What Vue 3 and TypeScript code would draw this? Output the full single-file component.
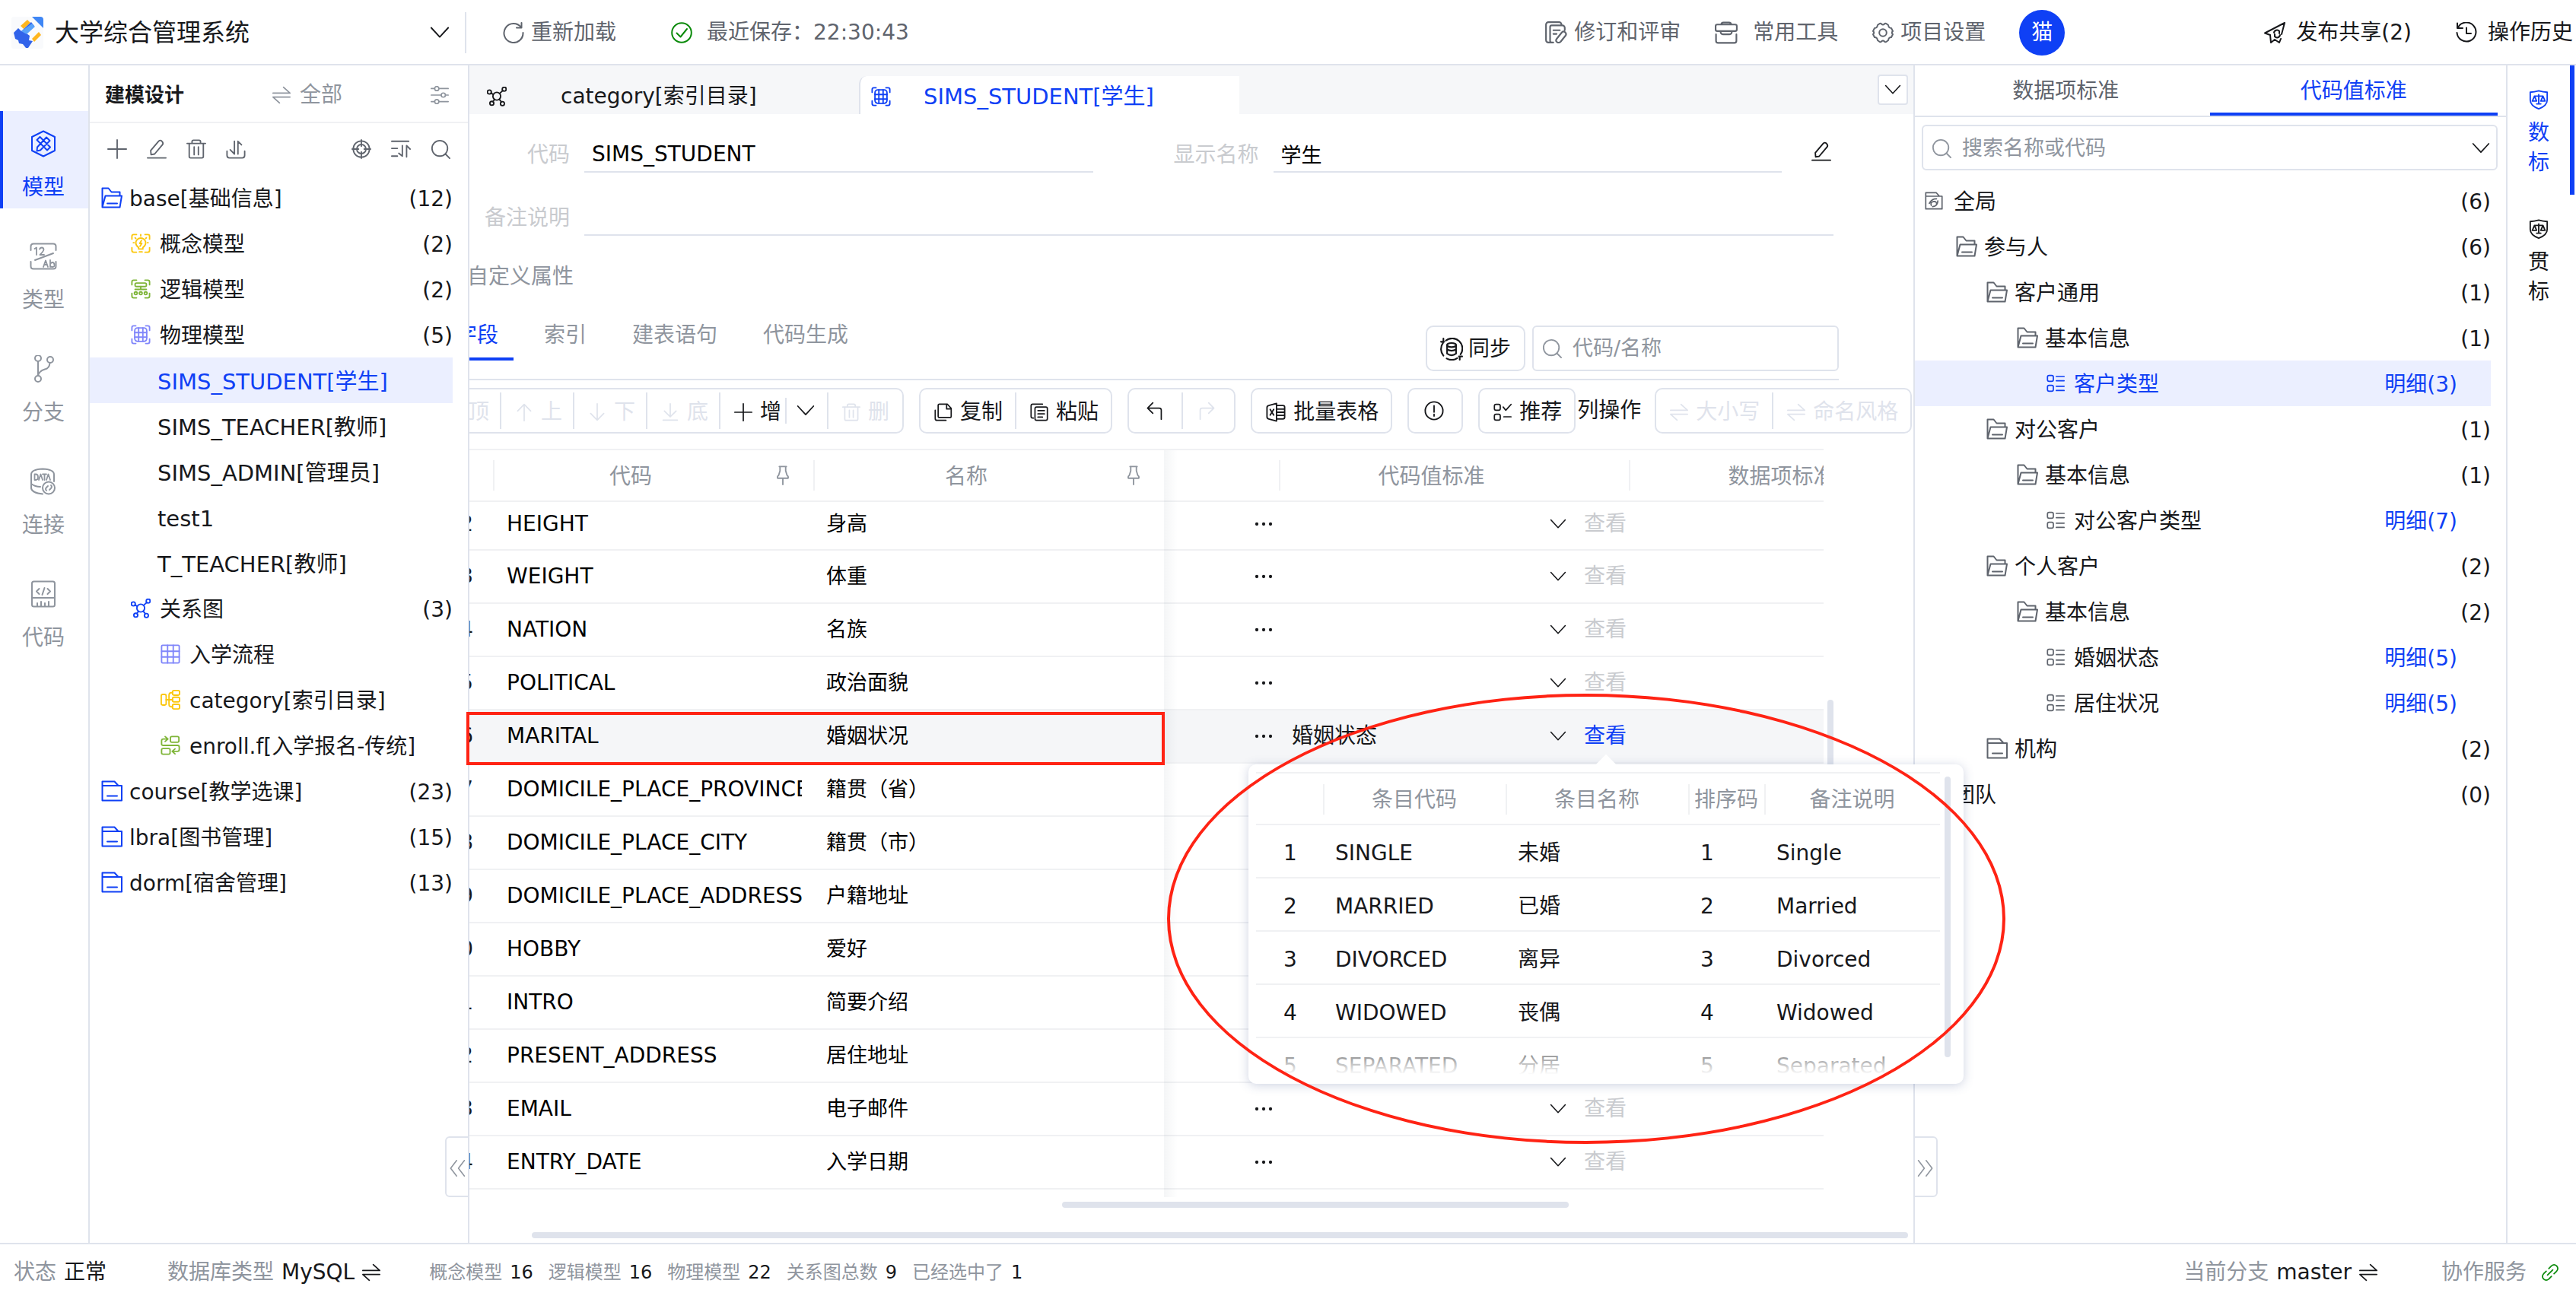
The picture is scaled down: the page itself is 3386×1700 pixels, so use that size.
<script setup lang="ts">
import { ref } from 'vue'

interface RailItem { icon: string; label: string }
interface TreeNode {
  label: string
  level: number
  icon?: string
  tone?: string
  count?: number
  table?: boolean
}
interface StdNode { label: string; level: number; icon?: string; count?: number; detail?: number }
interface Field { no: number; code: string; name: string; std?: string }
interface Entry { no: number; code: string; name: string; note: string }
interface Stat { label: string; value: number }

const rail: RailItem[] = [
  { icon: 'model', label: '模型' },
  { icon: 'type', label: '类型' },
  { icon: 'branch', label: '分支' },
  { icon: 'data', label: '连接' },
  { icon: 'codebox', label: '代码' }
]
const activeRail = ref('模型')

const tree: TreeNode[] = [
  { label: 'base[基础信息]', level: 0, icon: 'folder-open', tone: 'blue', count: 12 },
  { label: '概念模型', level: 1, icon: 'concept', tone: 'yellow', count: 2 },
  { label: '逻辑模型', level: 1, icon: 'logic', tone: 'green', count: 2 },
  { label: '物理模型', level: 1, icon: 'physical', tone: 'violet', count: 5 },
  { label: 'SIMS_STUDENT[学生]', level: 2, table: true },
  { label: 'SIMS_TEACHER[教师]', level: 2, table: true },
  { label: 'SIMS_ADMIN[管理员]', level: 2, table: true },
  { label: 'test1', level: 2, table: true },
  { label: 'T_TEACHER[教师]', level: 2, table: true },
  { label: '关系图', level: 1, icon: 'relation', tone: 'blue', count: 3 },
  { label: '入学流程', level: 2, icon: 'grid', tone: 'violet' },
  { label: 'category[索引目录]', level: 2, icon: 'mind', tone: 'yellow' },
  { label: 'enroll.f[入学报名-传统]', level: 2, icon: 'flow', tone: 'green' },
  { label: 'course[教学选课]', level: 0, icon: 'folder', tone: 'blue', count: 23 },
  { label: 'lbra[图书管理]', level: 0, icon: 'folder', tone: 'blue', count: 15 },
  { label: 'dorm[宿舍管理]', level: 0, icon: 'folder', tone: 'blue', count: 13 }
]
const selected = ref('SIMS_STUDENT[学生]')

const stdTree: StdNode[] = [
  { label: '全局', level: 0, icon: 'global', count: 6 },
  { label: '参与人', level: 1, icon: 'folder-open', count: 6 },
  { label: '客户通用', level: 2, icon: 'folder-open', count: 1 },
  { label: '基本信息', level: 3, icon: 'folder-open', count: 1 },
  { label: '客户类型', level: 4, icon: 'list', detail: 3 },
  { label: '对公客户', level: 2, icon: 'folder-open', count: 1 },
  { label: '基本信息', level: 3, icon: 'folder-open', count: 1 },
  { label: '对公客户类型', level: 4, icon: 'list', detail: 7 },
  { label: '个人客户', level: 2, icon: 'folder-open', count: 2 },
  { label: '基本信息', level: 3, icon: 'folder-open', count: 2 },
  { label: '婚姻状态', level: 4, icon: 'list', detail: 5 },
  { label: '居住状况', level: 4, icon: 'list', detail: 5 },
  { label: '机构', level: 2, icon: 'folder', count: 2 },
  { label: '团队', level: 0, icon: 'global', count: 0 }
]
const selectedStd = ref('客户类型')

const fields = ref<Field[]>([
  { no: 12, code: 'HEIGHT', name: '身高' },
  { no: 13, code: 'WEIGHT', name: '体重' },
  { no: 14, code: 'NATION', name: '名族' },
  { no: 15, code: 'POLITICAL', name: '政治面貌' },
  { no: 16, code: 'MARITAL', name: '婚姻状况', std: '婚姻状态' },
  { no: 17, code: 'DOMICILE_PLACE_PROVINCE', name: '籍贯（省）' },
  { no: 18, code: 'DOMICILE_PLACE_CITY', name: '籍贯（市）' },
  { no: 19, code: 'DOMICILE_PLACE_ADDRESS', name: '户籍地址' },
  { no: 20, code: 'HOBBY', name: '爱好' },
  { no: 21, code: 'INTRO', name: '简要介绍' },
  { no: 22, code: 'PRESENT_ADDRESS', name: '居住地址' },
  { no: 23, code: 'EMAIL', name: '电子邮件' },
  { no: 24, code: 'ENTRY_DATE', name: '入学日期' }
])

const entries: Entry[] = [
  { no: 1, code: 'SINGLE', name: '未婚', note: 'Single' },
  { no: 2, code: 'MARRIED', name: '已婚', note: 'Married' },
  { no: 3, code: 'DIVORCED', name: '离异', note: 'Divorced' },
  { no: 4, code: 'WIDOWED', name: '丧偶', note: 'Widowed' },
  { no: 5, code: 'SEPARATED', name: '分居', note: 'Separated' }
]

const stats: Stat[] = [
  { label: '概念模型', value: 16 },
  { label: '逻辑模型', value: 16 },
  { label: '物理模型', value: 22 },
  { label: '关系图总数', value: 9 },
  { label: '已经选中了', value: 1 }
]

const tableCode = ref('SIMS_STUDENT')
const tableName = ref('学生')
const tableNote = ref('')
</script>

<template>
  <div class="app">
    <svg class="defs" aria-hidden="true">
      <symbol id="i-down" viewBox="0 0 28 28"><path d="M2 7l12 13L26 7" /></symbol>
      <symbol id="i-reload" viewBox="0 0 28 28"><path d="M24 7A12.500 12.500 0 1 0 26.500 14M24.500 1v6.500H18" /></symbol>
      <symbol id="i-check" viewBox="0 0 28 28"><circle cx="14" cy="14" r="12.800" /><path d="M7.500 14.500l5 5L21 9" /></symbol>
      <symbol id="i-review" viewBox="0 0 28 28"><path d="M8 26H5a3 3 0 0 1-3-3V4a3 3 0 0 1 3-3h13a3 3 0 0 1 3 3M11 26H9a2 2 0 0 1-2-2V7a2 2 0 0 1 2-2h13a3 3 0 0 1 3 3v3M11 11h8M11 15.500h4M15.500 21l6-7.500q2-2 4 0t.5 4L20 25q-2 2-4.500.5t0-4.500z" /></symbol>
      <symbol id="i-toolbox" viewBox="0 0 28 28"><path d="M8 4q0-2.500 2.500-2.500h7Q20 1.500 20 4M3 4h22q2 0 2 2v4q0 2-2 2H3q-2 0-2-2V6q0-2 2-2zM7 12q0 4 3 4h8q3 0 3-4M1.500 16v8q0 2.500 2.500 2.500h20q2.500 0 2.500-2.500v-8" /></symbol>
      <symbol id="i-gear" viewBox="0 0 28 28"><path d="M9 2.500q2-1.500 3 0 2 2 4 0 1-1.500 3 0l2 1.500q.5 4 4 4l2 4q-2.500 2 0 4l-2 4q-3.500 0-4 4l-2 1.500q-2 1.500-3 0-2-2-4 0-1 1.500-3 0L7 24q-.5-4-4-4l-2-4q2.500-2 0-4l2-4q3.500 0 4-4z" /><circle cx="14" cy="14" r="4.800" /></symbol>
      <symbol id="i-share" viewBox="0 0 28 28"><path d="M8 17L1 14.500 27 1l-4 15M8 17l1 10 5-4 6 4 2-5M13 14a4 4 0 0 1 7-2M21 17a4 4 0 0 1-7 2M14 19v-3M20 12v3" /></symbol>
      <symbol id="i-history" viewBox="0 0 28 28"><path d="M3 7A12.500 12.500 0 1 1 1.500 14M2 1.500V8h7M14 7.500V15h6" /></symbol>
      <symbol id="i-model" viewBox="0 0 36 36"><path d="M18 1.500l15 7.500v18l-15 7.500L3 27V9zM9.500 13l4-4L27 22.500l-4 4zM22 9.500l4.500 4.500L14 26.500l-4.500 1 .5-5z" /></symbol>
      <symbol id="i-type" viewBox="0 0 36 36"><path d="M1.500 10V5q0-3.500 3.500-3.500h26q3.500 0 3.500 3.500v5M1.500 25v6q0 3.500 3.500 3.500h26q3.500 0 3.500-3.500v-6M7 23l24-9" /><path d="M6.500 8L9 6.500V16M13 8.500q1-2 3-2t2.500 2.500q0 2-5 7H19M18 32l3-8.500 3 8.500m-5-3h4M27 23v9m0-4q1-2 3-2t2.500 3-2.500 3-3-2" stroke-width="1.800" /></symbol>
      <symbol id="i-branch" viewBox="0 0 36 36"><circle cx="11" cy="4" r="4" /><circle cx="27" cy="6" r="4" /><circle cx="11" cy="31" r="4" /><path d="M11 8v19Q12 21 20 18.500q6-1 6.500-8.500" /></symbol>
      <symbol id="i-data" viewBox="0 0 36 36"><path d="M2 9q0-7 15-7.500Q32 2 32 9v9M2 9v18q1 6 15 7.500M2 21q5 4 12 4" /><circle cx="25" cy="26.500" r="8" /><path d="M22 30q-2-2 0-4l2-2m2 5l2-2q2-2 0-4M6.500 16V8.500H8q3 0 3 3.700T8 16zM12 16l2.500-7.500L17 16M17 8.500h5M19.500 8.500V16M22 16l2.500-7.500L27 16" stroke-width="1.800" /></symbol>
      <symbol id="i-codebox" viewBox="0 0 36 36"><rect x="3" y="1.500" width="30" height="33" rx="2.500" /><path d="M3 23h30M12.500 11L9 14.500l3.500 3.500M23.500 11l3.500 3.500-3.500 3.500M19.500 10l-3 9M10 34v-4M15 34v-6M20 34v-4M25 34v-6" /></symbol>
      <symbol id="i-swap" viewBox="0 0 28 28"><path d="M1 11h26L17 2M27 17H1l10 9" /></symbol>
      <symbol id="i-sliders" viewBox="0 0 28 28"><path d="M1 4h5m7 0h14M1 14h15m7 0h4M1 24h5m7 0h14" /><circle cx="9.500" cy="4" r="3.200" /><circle cx="19.500" cy="14" r="3.200" /><circle cx="9.500" cy="24" r="3.200" /></symbol>
      <symbol id="i-plus" viewBox="0 0 28 28"><path d="M14 1v26M1 14h26" /></symbol>
      <symbol id="i-edit" viewBox="0 0 28 28"><path d="M1 26.500h26M6 22l-.5-6L16.500 3q2.500-2.500 5 0t.5 5L11 21z" /></symbol>
      <symbol id="i-trash" viewBox="0 0 28 28"><path d="M1 6h26M8 6V3.500Q8 1.500 10 1.500h8q2 0 2 2V6M4 6v18.500q0 2 2 2h16q2 0 2-2V6M11 11v11M17 11v11" /></symbol>
      <symbol id="i-export" viewBox="0 0 28 28"><path d="M1.500 17v6q0 3.500 3.500 3.500h18q3.500 0 3.500-3.500v-6M12 3v18L6 15M17 21V3l5 5" /></symbol>
      <symbol id="i-aim" viewBox="0 0 28 28"><circle cx="14" cy="14" r="11.500" /><circle cx="14" cy="14" r="6.500" /><path d="M14 1v9M14 18v9M1 14h9M18 14h9" /></symbol>
      <symbol id="i-sort" viewBox="0 0 28 28"><path d="M1 3h24M1 13h8M1 24h8M16 9v15l-5-4M22 25V9l5 5" /></symbol>
      <symbol id="i-search" viewBox="0 0 28 28"><circle cx="13" cy="13" r="11" /><path d="M21 21l6 6" /></symbol>
      <symbol id="i-folder-open" viewBox="0 0 28 28"><path d="M1.500 26.500V1.500h8l4 5h11v5M1.500 26.500l4-15h21.500l-2.500 15zM8 21.500h13" /></symbol>
      <symbol id="i-folder" viewBox="0 0 28 28"><path d="M1.500 26.500v-25h16l5 5.500h4.500v19.500zM1.500 7H22M8 20.500h13" /></symbol>
      <symbol id="i-global" viewBox="0 0 28 28"><path d="M1.500 26.500v-25h16l5 5.500h4v19.500zM1.500 7H22M7 18q3-7 11-7M20 14q0 8-8 9M10 21q-2-5 4-6 5 0 4 5" /></symbol>
      <symbol id="i-list" viewBox="0 0 28 28"><rect x="1.500" y="2" width="9" height="9" rx="2.500" /><rect x="1.500" y="17" width="9" height="9" rx="2.500" /><path d="M15 3.500h12M15 10h12M15 18.500h12M15 25h12" /></symbol>
      <symbol id="i-concept" viewBox="0 0 28 28"><path d="M1.500 8V4q0-2.500 2.500-2.500h4M20 1.500h4q2.500 0 2.500 2.500v4M26.500 20v4q0 2.500-2.500 2.500h-4M8 26.500H4q-2.500 0-2.500-2.500v-4M11 20q-4-3-4-6.500a7 7 0 0 1 14 0q0 3.500-4 6.500v2h-6zM12 26h4M14 1.500v2M15 10l-2.500 4h3L13 18M4.500 13h-1M24.500 13h-1M6 6l1 1M22 6l-1 1" /></symbol>
      <symbol id="i-logic" viewBox="0 0 28 28"><path d="M1.500 8V4q0-2.500 2.500-2.500h4M20 1.500h4q2.500 0 2.500 2.500v4M26.500 20v4q0 2.500-2.500 2.500h-4M8 26.500H4q-2.500 0-2.500-2.500v-4" /><rect x="6" y="5.500" width="16" height="5" rx="2" /><path d="M14 10.500V14M6 14.500h16" /><circle cx="7" cy="20" r="2" /><circle cx="14" cy="20" r="2" /><circle cx="21" cy="20" r="2" /></symbol>
      <symbol id="i-physical" viewBox="0 0 28 28"><path d="M1.500 8V4q0-2.500 2.500-2.500h3M21 1.500h3q2.500 0 2.500 2.500v4M26.500 20v4q0 2.500-2.500 2.500h-3M7 26.500H4q-2.500 0-2.500-2.500v-4" /><rect x="5.500" y="4.500" width="17" height="19" rx="4" /><path d="M5.500 11h17M5.500 17.500h17M11 4.500v19M17 4.500v19" /></symbol>
      <symbol id="i-relation" viewBox="0 0 28 28"><circle cx="14" cy="13.500" r="5.500" /><circle cx="3.500" cy="7.500" r="2.800" /><circle cx="24.500" cy="3.500" r="2.800" /><circle cx="7" cy="23.500" r="2.800" /><circle cx="22" cy="24" r="2.800" /><path d="M6 9l3 2M22.500 5.500L18 9.500M8.500 21l2.500-3M20.500 21.500L17.500 18" /></symbol>
      <symbol id="i-grid" viewBox="0 0 28 28"><rect x="1.500" y="1.500" width="25" height="25" rx="1.500" /><path d="M1.500 10h25M1.500 18h25M10 1.500v25M18 1.500v25" /></symbol>
      <symbol id="i-mind" viewBox="0 0 28 28"><rect x="1" y="6.500" width="7" height="15" rx="2" /><rect x="17" y="1" width="10" height="6.500" rx="2" /><rect x="17" y="10.500" width="10" height="6.500" rx="2" /><rect x="17" y="20.500" width="10" height="6.500" rx="2" /><path d="M8 14h9M17 4h-2q-3 0-3 4v12q0 4 3 4h2" /></symbol>
      <symbol id="i-flow" viewBox="0 0 28 28"><rect x="14" y="1.500" width="12" height="8" rx="2" /><rect x="1.500" y="18.500" width="12" height="8" rx="2" /><path d="M9 5H4q-2.500 0-2.500 2.500V12q0 2 2.500 2h20q2.500 0 2.500 2.500V20q0 2.500-2.500 2.500h-5M6.500 1.500l4 3.500-4 3.500M20.500 19l-4 3.500 4 3.500" /></symbol>
      <symbol id="i-sync" viewBox="0 0 28 28"><path d="M4 5v-4M4 22A12.500 12.500 0 0 1 3.500 6.500M7 3.500a12.500 12.500 0 0 1 18 17M24 23v4M21 25a12.500 12.500 0 0 1-13 0.500M1 5h4M23 23h4" /><ellipse cx="14" cy="9" rx="5.500" ry="2.500" /><path d="M8.500 9v10.500q5.500 4 11 0V9M8.500 14.500q5.500 3 11 0" /></symbol>
      <symbol id="i-up-arrow" viewBox="0 0 28 28"><path d="M14 27V2M4 12L14 2l10 10" /></symbol>
      <symbol id="i-down-arrow" viewBox="0 0 28 28"><path d="M14 1v25M4 16l10 10 10-10" /></symbol>
      <symbol id="i-top" viewBox="0 0 28 28"><path d="M3 2h22M14 27V7M5 16l9-9 9 9" /></symbol>
      <symbol id="i-bottom" viewBox="0 0 28 28"><path d="M3 26h22M14 1v20M5 12l9 9 9-9" /></symbol>
      <symbol id="i-copy" viewBox="0 0 28 28"><path d="M8 1.500h12l6 6.500v12q0 2-2 2H8q-2 0-2-2v-16.500q0-2 2-2zM19 1.500V9h7M1.500 11v12.500q0 3 3 3H18" /></symbol>
      <symbol id="i-paste" viewBox="0 0 28 28"><path d="M5 23H4q-2.500 0-2.500-2.500V4q0-2.500 2.500-2.500h15M10 6h14q2.500 0 2.500 2.500V24q0 2.500-2.500 2.500H10q-2.500 0-2.500-2.500V8.500Q7.500 6 10 6zM12 11.500h10M12 16.500h10M12 21.500h7" /></symbol>
      <symbol id="i-undo" viewBox="0 0 28 28"><path d="M25 27V13q0-3-3-3H4M12 2l-8 8 8 8" /></symbol>
      <symbol id="i-redo" viewBox="0 0 28 28"><path d="M3 27V13q0-3 3-3h18M16 2l8 8-8 8" /></symbol>
      <symbol id="i-excel" viewBox="0 0 28 28"><path d="M15 1.500v25l-11-3q-2.500-.5-2.500-3v-13q0-2.500 2.500-3zM15 4.500h9q2.500 0 2.500 2.500v14q0 2.500-2.500 2.500h-9M15 9.500h11.500M15 14h11.500M15 18.500h11.500M6 10l5 8M11 10l-5 8" /></symbol>
      <symbol id="i-warn" viewBox="0 0 28 28"><circle cx="14" cy="14" r="12.500" /><path d="M14 7v9M14 19v2.500" /></symbol>
      <symbol id="i-suggest" viewBox="0 0 28 28"><rect x="1.500" y="2" width="9" height="9" rx="2.500" /><rect x="1.500" y="17" width="9" height="9" rx="2.500" /><path d="M15 6l4 5 8-9M16 21h11" /></symbol>
      <symbol id="i-pin" viewBox="0 0 18 28"><path d="M4 1.500h10M5 1.500v6L3 14q-2 1-1.500 4h15q.5-3-1.500-4l-2-6.500v-6M9 18v9" /></symbol>
      <symbol id="i-dots" viewBox="0 0 28 28"><g fill="currentColor" stroke="none"><circle cx="3.500" cy="14" r="2.500" /><circle cx="14" cy="14" r="2.500" /><circle cx="24.500" cy="14" r="2.500" /></g></symbol>
      <symbol id="i-shield" viewBox="0 0 28 28"><path d="M14 1.500q6 1.500 12 2v11q0 8-12 12.500Q2 22.500 2 14.500v-11q6-.5 12-2zM8 9h12M14 7v13M11 20h6M8 9l-3 7h6zM20 9l-3 7h6z" /></symbol>
      <symbol id="i-dleft" viewBox="0 0 28 28"><path d="M13 1L3 14l10 13M26 1L16 14l10 13" /></symbol>
      <symbol id="i-dright" viewBox="0 0 28 28"><path d="M2 1l10 13L2 27M15 1l10 13-10 13" /></symbol>
      <symbol id="i-link" viewBox="0 0 28 28"><path d="M12 8l4-4q4-3.500 8 0 3.500 4 0 8l-4 4M16 20l-4 4q-4 3.500-8 0-3.500-4 0-8l4-4M10 18l8-8" /></symbol>
    </svg>

    <header class="top">
      <div class="brand">
        <svg class="logo" viewBox="0 0 42 42" aria-hidden="true">
          <rect width="42" height="42" rx="3" fill="#f9fafc" />
          <path d="M27 0h11q4 0 4 4v11z" fill="#3f86f5" />
          <path d="M12 12l9-8 4 4-9 8z" fill="#ffb61f" />
          <path d="M3 21l6-6 4 4 13-12 4 5-10 10 4 3-1 6 5 1-6 9h-3l-4-5-5-1-1-4-4-2z" fill="#3163ea" />
          <path d="M13 19L27 9l4 4-11 10z" fill="#58a2fa" />
          <path d="M27 29l9-9 3 4-9 9z" fill="#ffb61f" />
        </svg>
        <select class="project" aria-label="项目"><option>大学综合管理系统</option></select>
        <svg class="ic s26"><use href="#i-down" /></svg>
      </div>
      <button class="hbtn reload"><svg class="ic s28"><use href="#i-reload" /></svg>重新加载</button>
      <div class="saved"><svg class="ic s28 ok"><use href="#i-check" /></svg><span>最近保存：22:30:43</span></div>
      <div class="spacer"></div>
      <button class="hbtn"><svg class="ic s30"><use href="#i-review" /></svg>修订和评审</button>
      <button class="hbtn wide"><svg class="ic s30"><use href="#i-toolbox" /></svg>常用工具</button>
      <button class="hbtn"><svg class="ic s28"><use href="#i-gear" /></svg>项目设置</button>
      <div class="avatar">猫</div>
      <button class="hbtn dark"><svg class="ic s28"><use href="#i-share" /></svg>发布共享(2)</button>
      <button class="hbtn dark last"><svg class="ic s28"><use href="#i-history" /></svg>操作历史</button>
    </header>

    <div class="body">
      <nav class="rail">
        <button v-for="r in rail" :key="r.label" :class="{ on: activeRail === r.label }" @click="activeRail = r.label">
          <svg class="ic s36"><use :href="'#i-' + r.icon" /></svg>{{ r.label }}
        </button>
      </nav>

      <aside class="side">
        <div class="side-head">
          <h2>建模设计</h2>
          <button class="all"><svg class="ic s24"><use href="#i-swap" /></svg>全部</button>
          <button aria-label="设置"><svg class="ic s24"><use href="#i-sliders" /></svg></button>
        </div>
        <div class="side-tools">
          <button aria-label="新增"><svg class="ic s26"><use href="#i-plus" /></svg></button>
          <button aria-label="编辑"><svg class="ic s26"><use href="#i-edit" /></svg></button>
          <button aria-label="删除"><svg class="ic s26"><use href="#i-trash" /></svg></button>
          <button aria-label="导出"><svg class="ic s26"><use href="#i-export" /></svg></button>
          <i class="spacer"></i>
          <button aria-label="定位"><svg class="ic s26"><use href="#i-aim" /></svg></button>
          <button aria-label="排序"><svg class="ic s26"><use href="#i-sort" /></svg></button>
          <button aria-label="搜索"><svg class="ic s26"><use href="#i-search" /></svg></button>
        </div>
        <ul class="tree">
          <li
            v-for="n in tree"
            :key="n.label"
            :class="['lv' + n.level, { tbl: n.table, on: selected === n.label }]"
            @click="selected = n.label"
          >
            <svg v-if="n.icon" :class="['ic', n.level ? 's26' : 's28', n.tone]"><use :href="'#i-' + n.icon" /></svg>
            <span class="label">{{ n.label }}</span>
            <span v-if="n.count" class="count">({{ n.count }})</span>
          </li>
        </ul>
        <button class="handle left" aria-label="收起"><svg class="ic s22"><use href="#i-dleft" /></svg></button>
      </aside>

      <main class="center">
        <div class="scroller">
          <div class="tabs">
            <button class="tab first"><svg class="ic s26"><use href="#i-relation" /></svg>category[索引目录]</button>
            <button class="tab on"><svg class="ic s26"><use href="#i-physical" /></svg><span class="upper">SIMS_STUDENT[学生]</span></button>
            <i class="spacer"></i>
            <button class="more" aria-label="更多"><svg class="ic s22"><use href="#i-down" /></svg></button>
          </div>

          <form class="form" @submit.prevent>
            <div class="frow">
              <label for="f-code">代码</label>
              <input id="f-code" v-model="tableCode" class="latin" />
              <label for="f-name" class="second">显示名称</label>
              <input id="f-name" v-model="tableName" />
              <button type="button" aria-label="编辑"><svg class="ic s26"><use href="#i-edit" /></svg></button>
            </div>
            <div class="frow">
              <label for="f-note">备注说明</label>
              <input id="f-note" v-model="tableNote" />
            </div>
          </form>

          <div class="shifted">
            <div class="custom">自定义属性</div>
            <div class="subnav">
              <button class="sub on">字段</button>
              <button class="sub">索引</button>
              <button class="sub">建表语句</button>
              <button class="sub">代码生成</button>
              <i class="spacer"></i>
              <button class="sync"><svg class="ic s30"><use href="#i-sync" /></svg>同步</button>
              <label class="find"><svg class="ic s26"><use href="#i-search" /></svg><input placeholder="代码/名称" aria-label="代码/名称" /></label>
            </div>

            <div class="toolbar">
              <div class="group tight">
                <button disabled><svg class="ic s24"><use href="#i-top" /></svg>顶</button>
                <button disabled><svg class="ic s24"><use href="#i-up-arrow" /></svg>上</button>
                <button disabled><svg class="ic s24"><use href="#i-down-arrow" /></svg>下</button>
                <button disabled><svg class="ic s24"><use href="#i-bottom" /></svg>底</button>
                <button class="add"><svg class="ic s24"><use href="#i-plus" /></svg>增</button>
                <button class="drop" aria-label="更多新增"><svg class="ic s24"><use href="#i-down" /></svg></button>
                <button class="del" disabled><svg class="ic s24"><use href="#i-trash" /></svg>删</button>
              </div>
              <div class="group">
                <button><svg class="ic s24"><use href="#i-copy" /></svg>复制</button>
                <button><svg class="ic s24"><use href="#i-paste" /></svg>粘贴</button>
              </div>
              <div class="group">
                <button class="only" aria-label="撤销"><svg class="ic s24"><use href="#i-undo" /></svg></button>
                <button class="only" aria-label="重做" disabled><svg class="ic s24"><use href="#i-redo" /></svg></button>
              </div>
              <div class="group"><button><svg class="ic s26"><use href="#i-excel" /></svg>批量表格</button></div>
              <div class="group"><button class="only" aria-label="提示"><svg class="ic s26"><use href="#i-warn" /></svg></button></div>
              <div class="group"><button><svg class="ic s24"><use href="#i-suggest" /></svg>推荐</button></div>
              <span class="ops">列操作</span>
              <div class="group">
                <button disabled><svg class="ic s24"><use href="#i-swap" /></svg>大小写</button>
                <button disabled><svg class="ic s24"><use href="#i-swap" /></svg>命名风格</button>
              </div>
            </div>

            <div class="grid-wrap">
              <table class="fields">
                <colgroup><col class="c-no" /><col class="c-code" /><col class="c-name" /><col class="c-gap" /><col class="c-std" /><col class="c-std" /></colgroup>
                <thead>
                  <tr>
                    <th></th>
                    <th><div class="th"><span>代码</span><svg class="ic pin"><use href="#i-pin" /></svg></div></th>
                    <th><div class="th"><span>名称</span><svg class="ic pin"><use href="#i-pin" /></svg></div></th>
                    <th></th>
                    <th><div class="th nopin"><span>代码值标准</span></div></th>
                    <th><div class="th nopin"><span>数据项标准</span></div></th>
                  </tr>
                </thead>
                <tbody>
                  <tr v-for="f in fields" :key="f.no" :class="{ on: f.std }">
                    <td class="no">{{ f.no }}</td>
                    <td class="code"><input v-model="f.code" :aria-label="'代码 ' + f.no" /></td>
                    <td class="name"><input v-model="f.name" :aria-label="'名称 ' + f.no" /></td>
                    <td class="dots"><button aria-label="更多"><svg class="ic s24"><use href="#i-dots" /></svg></button></td>
                    <td class="std">
                      <div class="stdcell">
                        <select :aria-label="'代码值标准 ' + f.no"><option>{{ f.std }}</option></select>
                        <svg class="ic s22"><use href="#i-down" /></svg>
                        <button class="view" :disabled="!f.std">查看</button>
                      </div>
                    </td>
                    <td></td>
                  </tr>
                </tbody>
              </table>
              <div class="edge"></div>
            </div>
            <div class="hbar inner"></div>
          </div>
          <div class="hbar outer"></div>
        </div>

        <div class="vbar"></div>

        <section class="popup">
          <div class="clip">
            <table class="entries">
              <colgroup><col class="p-no" /><col class="p-code" /><col class="p-code" /><col class="p-ord" /><col /></colgroup>
              <thead>
                <tr><th></th><th>条目代码</th><th>条目名称</th><th>排序码</th><th>备注说明</th></tr>
              </thead>
              <tbody>
                <tr v-for="e in entries" :key="e.no">
                  <td class="mid">{{ e.no }}</td><td>{{ e.code }}</td><td>{{ e.name }}</td><td>{{ e.no }}</td><td>{{ e.note }}</td>
                </tr>
              </tbody>
            </table>
            <div class="fade"></div>
          </div>
          <div class="pbar"></div>
        </section>

        <div class="mark-box"></div>
        <div class="mark-ring"></div>
      </main>

      <aside class="std-panel">
        <div class="std-tabs">
          <button>数据项标准</button>
          <button class="on">代码值标准</button>
        </div>
        <div class="std-search">
          <svg class="ic s26"><use href="#i-search" /></svg>
          <input placeholder="搜索名称或代码" aria-label="搜索名称或代码" />
          <button aria-label="展开"><svg class="ic s24"><use href="#i-down" /></svg></button>
        </div>
        <ul class="std-tree">
          <li v-for="(n, i) in stdTree" :key="i" :class="['sl' + n.level, { on: selectedStd === n.label }]" @click="selectedStd = n.label">
            <svg :class="['ic', n.icon === 'global' || n.icon === 'list' ? 's24' : 's28']"><use :href="'#i-' + n.icon" /></svg>
            <span class="label">{{ n.label }}</span>
            <a v-if="n.detail" href="#" class="detail" @click.prevent>明细({{ n.detail }})</a>
            <span v-else class="count">({{ n.count }})</span>
          </li>
        </ul>
        <button class="handle right" aria-label="收起"><svg class="ic s22"><use href="#i-dright" /></svg></button>
      </aside>

      <nav class="vrail">
        <button class="on"><svg class="ic s26"><use href="#i-shield" /></svg><span>数</span><span>标</span></button>
        <button><svg class="ic s26"><use href="#i-shield" /></svg><span>贯</span><span>标</span></button>
      </nav>
    </div>

    <footer class="foot">
      <div class="pair"><span>状态</span><b>正常</b></div>
      <div class="pair db"><span>数据库类型</span><b>MySQL</b><svg class="ic s24"><use href="#i-swap" /></svg></div>
      <div class="stats">
        <div v-for="s in stats" :key="s.label" class="stat"><span>{{ s.label }}</span><b>{{ s.value }}</b></div>
      </div>
      <i class="spacer"></i>
      <div class="pair"><span>当前分支</span><b>master</b><svg class="ic s24"><use href="#i-swap" /></svg></div>
      <div class="pair service"><span>协作服务</span><svg class="ic s24 ok"><use href="#i-link" /></svg></div>
    </footer>
  </div>
</template>

<style>
html,
body {
  margin: 0;
  background: #fff;
}
</style>

<style scoped>
.app {
  --blue: #0f40f5;
  --line: #dfe3ec;
  --soft: #f0f1f3;
  --grey: #8f959e;
  --mid: #5f646d;
  --text: #17181b;
  display: flex;
  flex-direction: column;
  min-height: 100vh;
  overflow: hidden;
  font-family: 'DejaVu Sans', 'Noto Sans CJK SC', sans-serif;
  font-size: 28px;
  line-height: 40px;
  color: var(--text);
}
.app *,
.app *::before,
.app *::after {
  box-sizing: border-box;
}
button,
input,
select {
  margin: 0;
  padding: 0;
  border: 0;
  background: none;
  outline: none;
  font: inherit;
  color: inherit;
  border-radius: 0;
  white-space: nowrap;
}
select {
  appearance: none;
}
a {
  text-decoration: none;
}
ul {
  margin: 0;
  padding: 0;
  list-style: none;
}
button {
  display: flex;
  align-items: center;
  justify-content: center;
}
.spacer {
  flex: 1;
}
.defs {
  display: none;
}
.ic {
  flex: none;
  fill: none;
  stroke: currentColor;
  stroke-width: 2;
  stroke-linecap: round;
  stroke-linejoin: round;
}
.s22 { width: 22px; height: 22px; }
.s24 { width: 24px; height: 24px; }
.s26 { width: 26px; height: 26px; }
.s28 { width: 28px; height: 28px; }
.s30 { width: 30px; height: 30px; }
.s36 { width: 36px; height: 36px; }
.ok { color: #0a8a0a; }
.blue { color: var(--blue); }
.yellow { color: #fbc70d; }
.green { color: #7fb539; }
.violet { color: #8086fa; }

/* top bar */
.top {
  display: flex;
  align-items: center;
  height: 86px;
  padding: 2px 4px 0 0;
  border-bottom: 2px solid var(--line);
}
.brand {
  display: flex;
  align-items: center;
  width: 613px;
  height: 54px;
  padding: 0 20px 0 15px;
  border-right: 2px solid var(--line);
}
.logo {
  width: 42px;
  height: 42px;
  margin-right: 15px;
}
.project {
  flex: 1;
  font-size: 32px;
}
.hbtn {
  gap: 9px;
  margin-left: 45px;
  color: var(--mid);
}
.hbtn.reload {
  margin-left: 48px;
}
.hbtn.wide {
  gap: 20px;
}
.hbtn.dark {
  margin-left: 262px;
  gap: 14px;
  color: var(--text);
}
.hbtn.last {
  margin-left: 58px;
}
.saved {
  display: flex;
  align-items: center;
  gap: 19px;
  margin-left: 72px;
  color: var(--mid);
}
.avatar {
  width: 60px;
  height: 60px;
  margin-left: 44px;
  border-radius: 50%;
  background: var(--blue);
  color: #fff;
  line-height: 60px;
  text-align: center;
}

/* frame */
.body {
  flex: 1;
  display: flex;
}
.rail {
  flex: none;
  display: flex;
  flex-direction: column;
  gap: 20px;
  width: 118px;
  padding-top: 60px;
  border-right: 2px solid var(--line);
}
.rail button {
  flex-direction: column;
  justify-content: flex-start;
  gap: 20px;
  height: 128px;
  border-left: 4px solid transparent;
  padding: 25px 6px 0 0;
  color: var(--grey);
}
.rail button.on {
  border-left-color: var(--blue);
  background: #ebefff;
  color: var(--blue);
}

/* model tree */
.side {
  flex: none;
  position: relative;
  width: 499px;
  border-right: 2px solid var(--line);
}
.side-head {
  display: flex;
  align-items: center;
  height: 76px;
  padding: 4px 25px 0 20px;
  border-bottom: 2px solid var(--soft);
  color: var(--grey);
}
.side-head h2 {
  margin: 0;
  font-size: 26px;
  color: var(--text);
}
.side-head .all {
  gap: 12px;
  margin: 0 auto;
}
.side-tools {
  display: flex;
  gap: 26px;
  height: 68px;
  padding: 0 23px 0 23px;
  color: var(--mid);
}
.side-tools .spacer {
  margin: 0 -26px;
}
.tree li {
  display: flex;
  align-items: center;
  height: 60px;
  margin-right: 20px;
  padding-left: 15px;
}
.tree .lv1 {
  padding-left: 54px;
}
.tree .lv2 {
  padding-left: 93px;
}
.tree .tbl {
  padding-left: 89px;
  font-size: 29px;
}
.tree .ic {
  margin-right: 12px;
}
.tree .lv0 .ic {
  margin-right: 9px;
}
.tree .on {
  background: #ebefff;
  color: var(--blue);
}
.label,
.count,
.detail {
  padding-top: 4px;
}
.label {
  flex: 1;
  white-space: nowrap;
}
.handle {
  position: absolute;
  top: 1408px;
  width: 32px;
  height: 80px;
  padding-top: 4px;
  border: 2px solid var(--line);
  background: #fff;
  color: var(--grey);
}
.handle.left {
  right: -2px;
  border-radius: 6px 0 0 6px;
}
.handle.right {
  left: -2px;
  border-radius: 0 6px 6px 0;
}

/* editor */
.center {
  position: relative;
  flex: 1;
  min-width: 0;
}
.scroller {
  height: 100%;
  overflow: hidden;
}
.tabs {
  display: flex;
  align-items: flex-end;
  height: 64px;
  background: #f6f7f9;
}
.tab {
  justify-content: flex-start;
  gap: 43px;
  width: 500px;
  height: 50px;
  padding: 4px 0 0 14px;
}
.tab.first {
  width: 512px;
  gap: 71px;
  padding-left: 23px;
}
.tab.on {
  border-left: 2px solid var(--line);
  border-radius: 10px 0 0 0;
  background: #fff;
  color: var(--blue);
}
.upper {
  font-size: 29px;
}
.more {
  align-self: center;
  width: 40px;
  height: 40px;
  margin-right: 7px;
  border: 2px solid var(--line);
  border-radius: 4px;
  background: #fff;
}
.form {
  padding: 21px 105px 0 22px;
}
.frow {
  display: flex;
  align-items: center;
  height: 56px;
  margin-bottom: 27px;
}
.frow label {
  display: flex;
  justify-content: flex-end;
  width: 110px;
  margin-right: 19px;
  padding-top: 10px;
  white-space: nowrap;
  color: #c9cbcf;
}
.frow .second {
  width: 218px;
}
.frow input {
  flex: 1;
  min-width: 0;
  height: 56px;
  padding: 8px 10px 0;
  border-bottom: 2px solid var(--line);
  font-size: 27px;
  color: #000;
}
.frow .latin {
  font-size: 28px;
}
.frow button {
  margin: 0 3px 0 39px;
}
.shifted {
  margin-left: -56px;
}
.custom {
  margin-top: 34px;
  padding-left: 53px;
  color: var(--grey);
}
.subnav {
  display: flex;
  align-items: flex-start;
  height: 92px;
  margin: 24px 98px 0 0;
  padding-left: 18px;
  border-bottom: 2px solid var(--line);
  color: var(--grey);
}
.sub {
  height: 66px;
  margin-right: 20px;
  padding: 4px 20px 0;
  border-bottom: 4px solid transparent;
}
.sub.on {
  border-bottom-color: var(--blue);
  color: var(--blue);
}
.sync {
  gap: 7px;
  width: 131px;
  height: 60px;
  margin: 20px 9px 0 0;
  padding-top: 2px;
  border: 2px solid var(--line);
  border-radius: 10px;
  color: var(--text);
}
.find {
  display: flex;
  align-items: center;
  gap: 14px;
  width: 403px;
  height: 60px;
  margin-top: 20px;
  padding: 0 10px 0 11px;
  border: 2px solid var(--line);
  border-radius: 6px;
}
.find input,
.std-search input {
  flex: 1;
  min-width: 0;
  font-size: 27px;
}
input::placeholder {
  color: var(--grey);
  opacity: 1;
}
.toolbar {
  display: flex;
  align-items: center;
  margin-top: 10px;
  white-space: nowrap;
}
.group {
  flex: none;
  display: flex;
  align-items: center;
  height: 60px;
  margin-right: 20px;
  border: 2px solid var(--line);
  border-radius: 10px;
}
.group button {
  gap: 10px;
  height: 48px;
  padding: 3px 16px 0 18px;
}
.group button + button {
  border-left: 2px solid var(--line);
}
.group.tight button {
  padding-right: 14px;
}
.group button:disabled {
  color: var(--line);
}
.group.tight .add {
  padding-right: 5px;
}
.group.tight .drop {
  width: 55px;
  height: 34px;
  padding: 0 4px 0 0;
}
.group.tight .del {
  padding-right: 17px;
}
.group .only {
  width: 69px;
  padding: 0 4px 0 0;
}
.ops {
  margin: 0 18px 0 -18px;
}
.grid-wrap {
  position: relative;
  height: 984px;
  margin: 20px 118px 0 0;
  overflow: hidden;
  border-top: 2px solid var(--soft);
}
.fields,
.entries {
  table-layout: fixed;
  border-collapse: separate;
  border-spacing: 0;
}
.fields {
  width: 2040px;
}
.c-no { width: 87px; }
.c-code { width: 421px; }
.c-name { width: 461px; }
.c-gap { width: 151px; }
.c-std { width: 460px; }
th,
td {
  padding: 0;
  border-bottom: 2px solid var(--soft);
  text-align: left;
  font-weight: normal;
}
.fields th {
  height: 68px;
}
.fields td {
  height: 70px;
}
.th {
  display: flex;
  align-items: center;
  height: 40px;
  border-left: 2px solid var(--soft);
  color: var(--grey);
}
.fields th:nth-child(5) .th,
.fields th:nth-child(6) .th {
  padding-right: 61px;
}
.th span {
  flex: 1;
  padding-top: 4px;
  text-align: center;
}
.pin {
  width: 18px;
  height: 26px;
  margin: 0 31px 0 12px;
}
/* the list is scrolled by a few pixels, so its first row sits partly under the head */
.fields tbody tr:first-child td {
  height: 64px;
  padding-bottom: 4px;
}
.fields tbody .on td {
  background: #f5f6f8;
}
td.no {
  padding-right: 26px;
  text-align: right;
}
td.code input {
  display: block;
  width: 388px;
  margin-left: 18px;
  color: #000;
}
td.name input {
  display: block;
  width: 420px;
  margin-left: 17px;
  font-size: 27px;
  color: #000;
}
td.dots button {
  margin: 0 8px 0 auto;
}
.stdcell {
  display: flex;
  align-items: center;
  padding-left: 17px;
}
.stdcell select {
  width: 339px;
  height: 40px;
}
.view {
  margin-left: 23px;
  color: var(--blue);
}
.view:disabled {
  color: #c9cbcf;
}
.edge {
  position: absolute;
  top: 0;
  bottom: 0;
  left: 969px;
  width: 18px;
  background: linear-gradient(90deg, #1f3a500c, #1f3a5000);
}
.hbar,
.vbar,
.pbar {
  border-radius: 4px;
  background: var(--line);
}
.hbar {
  height: 8px;
}
.hbar.inner {
  width: 666px;
  margin: 6px 0 0 835px;
}
.hbar.outer {
  margin: 32px 7px 0 82px;
}
.vbar {
  position: absolute;
  top: 834px;
  right: 105px;
  width: 8px;
  height: 200px;
}

/* code value popup */
.popup {
  position: absolute;
  z-index: 3;
  top: 919px;
  right: -66px;
  width: 940px;
  height: 420px;
  padding: 10px 31px 10px 10px;
  border-radius: 10px;
  background: #fff;
  box-shadow: 0 2px 14px #3c508c40;
}
.popup::before {
  content: '';
  position: absolute;
  top: -9px;
  left: 460px;
  width: 20px;
  height: 20px;
  background: #fff;
  transform: rotate(45deg);
}
.clip {
  position: relative;
  height: 400px;
  overflow: hidden;
  background: #fff;
  border-top: 2px solid var(--soft);
}
.entries {
  width: 100%;
}
.p-no { width: 88px; }
.p-code { width: 240px; }
.p-ord { width: 100px; }
.entries th {
  position: relative;
  height: 68px;
  padding-top: 3px;
  text-align: center;
  color: var(--grey);
}
.entries th + th::before {
  content: '';
  position: absolute;
  left: 0;
  top: 14px;
  width: 2px;
  height: 40px;
  background: var(--soft);
}
.entries td {
  height: 70px;
  padding: 5px 0 0 16px;
}
.entries td.mid {
  padding-left: 2px;
  text-align: center;
}
.fade {
  position: absolute;
  left: 0;
  right: 0;
  bottom: 0;
  height: 60px;
  background: linear-gradient(#fff0 10%, #fff8 55%, #fff 96%);
}
.pbar {
  position: absolute;
  top: 16px;
  right: 17px;
  width: 8px;
  height: 369px;
}

/* review marks */
.mark-box {
  position: absolute;
  z-index: 4;
  top: 850px;
  left: -4px;
  width: 918px;
  height: 70px;
  border: 4px solid #ff2314;
}
.mark-ring {
  position: absolute;
  z-index: 4;
  top: 826px;
  right: -121px;
  width: 1102px;
  height: 592px;
  border: 4px solid #ff2314;
  border-radius: 50%;
}

/* standards */
.std-panel {
  position: relative;
  flex: none;
  width: 781px;
  border: solid var(--line);
  border-width: 0 2px;
}
.std-tabs {
  display: flex;
  height: 68px;
  padding: 0 11px 0 9px;
  border-bottom: 2px solid var(--line);
  color: var(--mid);
}
.std-tabs button {
  flex: 1;
  padding-top: 6px;
  border-bottom: 4px solid transparent;
}
.std-tabs .on {
  border-bottom-color: var(--blue);
  color: var(--blue);
}
.std-search {
  display: flex;
  align-items: center;
  gap: 14px;
  height: 60px;
  margin: 10px 11px 10px 9px;
  padding: 2px 8px 0 11px;
  border: 2px solid var(--line);
  border-radius: 6px;
}
.std-search > .ic {
  color: var(--grey);
}
.std-tree li {
  display: flex;
  align-items: center;
  height: 60px;
  margin-right: 20px;
  padding-left: 13px;
}
.std-tree .ic {
  margin-right: 9px;
  color: var(--mid);
}
.std-tree .sl0 .ic {
  margin-right: 14px;
}
.std-tree .sl4 .ic {
  margin-right: 12px;
}
.std-tree .sl1 { padding-left: 54px; }
.std-tree .sl2 { padding-left: 94px; }
.std-tree .sl3 { padding-left: 134px; }
.std-tree .sl4 { padding-left: 173px; }
.std-tree .on {
  background: #ebefff;
  color: var(--blue);
}
.std-tree .on .ic {
  color: var(--blue);
}
.detail {
  margin-right: 44px;
  color: var(--blue);
}
.vrail {
  flex: none;
  width: 90px;
}
.vrail button {
  flex-direction: column;
  justify-content: flex-start;
  width: 88px;
  height: 170px;
  padding-top: 32px;
  border-right: 6px solid transparent;
}
.vrail .ic {
  margin-bottom: 11px;
}
.vrail .on {
  border-right-color: var(--blue);
  color: var(--blue);
}
.vrail span {
  line-height: 39px;
}

/* status bar */
.foot {
  display: flex;
  align-items: center;
  height: 66px;
  padding: 9px 22px 0 18px;
  border-top: 2px solid var(--line);
  color: var(--grey);
}
.foot b {
  font-weight: normal;
  color: var(--text);
}
.pair {
  display: flex;
  align-items: center;
  gap: 10px;
}
.pair .ic {
  color: var(--text);
}
.pair .ok {
  color: #0a8a0a;
}
.db {
  margin: 0 64px 0 80px;
}
.stats {
  display: flex;
  gap: 20px;
  font-size: 24px;
}
.stat {
  display: flex;
  gap: 10px;
}
.service {
  margin-left: 84px;
  gap: 19px;
}
</style>
